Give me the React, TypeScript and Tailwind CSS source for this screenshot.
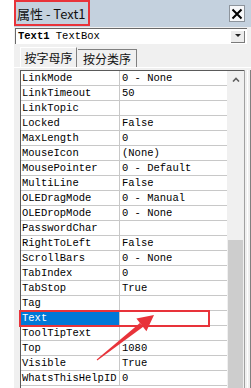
import React from 'react'

const MONO = { fontFamily: '"Liberation Mono", "DejaVu Sans Mono", monospace' }
const CJK = { fontFamily: '"Noto Sans CJK SC", "Noto Sans", sans-serif' }

const PROPS: [string, string][] = [
  ['LinkMode', '0 - None'],
  ['LinkTimeout', '50'],
  ['LinkTopic', ''],
  ['Locked', 'False'],
  ['MaxLength', '0'],
  ['MouseIcon', '(None)'],
  ['MousePointer', '0 - Default'],
  ['MultiLine', 'False'],
  ['OLEDragMode', '0 - Manual'],
  ['OLEDropMode', '0 - None'],
  ['PasswordChar', ''],
  ['RightToLeft', 'False'],
  ['ScrollBars', '0 - None'],
  ['TabIndex', '0'],
  ['TabStop', 'True'],
  ['Tag', ''],
  ['Text', ''],
  ['ToolTipText', ''],
  ['Top', '1080'],
  ['Visible', 'True'],
  ['WhatsThisHelpID', '0'],
]

export default function App() {
  return (
    <div className="relative flex w-[251px] h-[388px] overflow-hidden bg-white" style={MONO}>
      <div className="w-[14px] shrink-0 bg-white" />

      {/* window */}
      <div className="flex w-[237px] shrink-0 flex-col bg-[#f0f0f0]">
        {/* title bar */}
        <div className="flex h-[27px] items-center justify-between bg-[#c4d1de] pl-[3px] pr-[6px]">
          <span className="text-[13px] leading-none text-[#111]" style={CJK}>属性 - Text1</span>
          <div className="flex h-[17px] w-[16px] items-center justify-center border border-[#8d949c] bg-[#f6f7f9]">
            <svg width="12" height="12" viewBox="0 0 12 12">
              <path d="M1.5 1.5 L10.5 10.5 M10.5 1.5 L1.5 10.5" stroke="#000" strokeWidth="2" />
            </svg>
          </div>
        </div>

        {/* object dropdown */}
        <div className="ml-[1px] mr-[4px] mt-[1px] flex h-[16px] items-center border-l border-t border-[#696969] bg-white pl-[2px] pr-[2px]">
          <span className="flex-1 whitespace-pre text-[10.5px] leading-none text-black">
            <b>Text1</b> TextBox
          </span>
          <div className="flex h-[12px] w-[14px] items-center justify-center border-b border-r border-[#7a7a7a] bg-[#ececec]">
            <svg width="6" height="4" viewBox="0 0 6 4"><path d="M0 0 H6 L3 3 Z" fill="#222" /></svg>
          </div>
        </div>

        {/* tabs */}
        <div className="mt-[3px] flex h-[20px] items-end pl-[6px]">
          <div className="flex h-[20px] w-[57px] items-center justify-center border-l border-t border-white border-r-[#808080] border-r text-[12px] leading-none text-[#111]" style={CJK}>
            按字母序
          </div>
          <div className="ml-[1px] flex h-[18px] w-[59px] items-center justify-center border-r border-t border-[#808080] text-[12px] leading-none text-[#111]" style={CJK}>
            按分类序
          </div>
        </div>

        {/* grid panel */}
        <div className="flex flex-1 flex-col border-t border-white pt-[2px]">
          <div className="flex flex-1 pl-[6px]">
            <div className="flex flex-1 border-l border-t border-[#5a5a5a]">
              <div className="w-[206px] bg-white">
                {PROPS.map(([name, value]) => {
                  const sel = name === 'Text'
                  return (
                    <div key={name} className="flex h-[15px] border-b border-[#c8c8c8] text-[10.5px] leading-[14px]">
                      <div className={`w-[99px] truncate border-r border-[#c8c8c8] pl-[1px] ${sel ? 'bg-[#0078d7] text-white' : 'text-black'}`}>
                        {name}
                      </div>
                      <div className="flex-1 whitespace-pre pl-[2px] text-black">{value}</div>
                    </div>
                  )
                })}
              </div>

              {/* scrollbar */}
              <div className="flex w-[17px] flex-col bg-[#f0f0f0]">
                <div className="flex h-[17px] items-center justify-center">
                  <svg width="8" height="5" viewBox="0 0 8 5"><path d="M1 4.5 L4 1.5 L7 4.5" stroke="#606060" strokeWidth="1.6" fill="none" /></svg>
                </div>
                <div className="h-[152px]" />
                <div className="mx-[1px] flex-1 bg-[#cdcdcd]" />
              </div>
            </div>

            {/* frame edge */}
            <div className="flex w-[7px] gap-[2px]">
              <div className="w-[1px] bg-[#a0a0a0]" />
              <div className="w-[2px] bg-white" />
              <div className="w-[1px] bg-[#808080]" />
            </div>
          </div>
        </div>
      </div>

      {/* annotation: box around title */}
      <div className="absolute left-[14px] top-0 h-[26px] w-[76px] border-2 border-[#e8333a]" />

      {/* annotation: box around Text row */}
      <div className="absolute left-[19px] top-[310px] h-[17px] w-[191px] border-2 border-[#e8333a]" />

      {/* annotation: arrow */}
      <svg className="absolute left-0 top-0" width="251" height="388" viewBox="0 0 251 388">
        <polygon points="96.7,359.6 97.3,360.4 142.9,326.9 139.9,323 " fill="#e8333a" />
        <polygon points="154,315 136.4,318.6 146.4,331.2" fill="#e8333a" />
      </svg>
    </div>
  )
}
